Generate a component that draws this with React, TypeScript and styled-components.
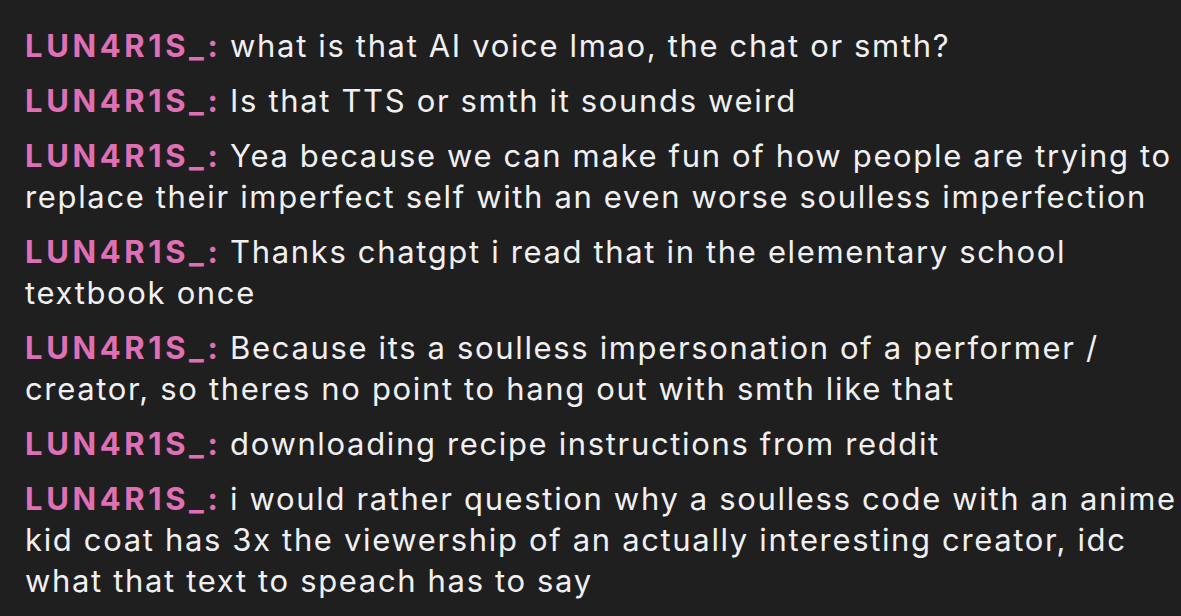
import React from "react";
import styled, { createGlobalStyle } from "styled-components";

const GlobalStyle = createGlobalStyle`
  html, body {
    margin: 0;
    padding: 0;
    background: #1f1f20;
  }
  body {
    font-family: Inter, "Noto Sans", "Liberation Sans", sans-serif;
  }
`;

const ChatList = styled.div`
  display: flex;
  flex-direction: column;
  gap: 14px;
  padding: 25px 0 20px 25px;
  min-height: 616px;
  box-sizing: border-box;
  background: #1f1f20;
`;

const Message = styled.div`
  font-size: 31px;
  line-height: 41px;
  color: #f0f0f2;
`;

const Author = styled.span<{ $color: string }>`
  color: ${(p) => p.$color};
  font-weight: 700;
  letter-spacing: 3.6px;
`;

const Body = styled.span`
  font-weight: 400;
  letter-spacing: 1.65px;
`;

const messages = [
  "what is that AI voice lmao, the chat or smth?",
  "Is that TTS or smth it sounds weird",
  "Yea because we can make fun of how people are trying to replace their imperfect self with an even worse soulless imperfection",
  "Thanks chatgpt i read that in the elementary school textbook once",
  "Because its a soulless impersonation of a performer / creator, so theres no point to hang out with smth like that",
  "downloading recipe instructions from reddit",
  "i would rather question why a soulless code with an anime kid coat has 3x the viewership of an actually interesting creator, idc what that text to speach has to say",
];

export default function App() {
  return (
    <>
      <GlobalStyle />
      <ChatList>
        {messages.map((m, i) => (
          <Message key={i}>
            <Author $color="#e070b6">LUN4R1S_:</Author> <Body>{m}</Body>
          </Message>
        ))}
      </ChatList>
    </>
  );
}
